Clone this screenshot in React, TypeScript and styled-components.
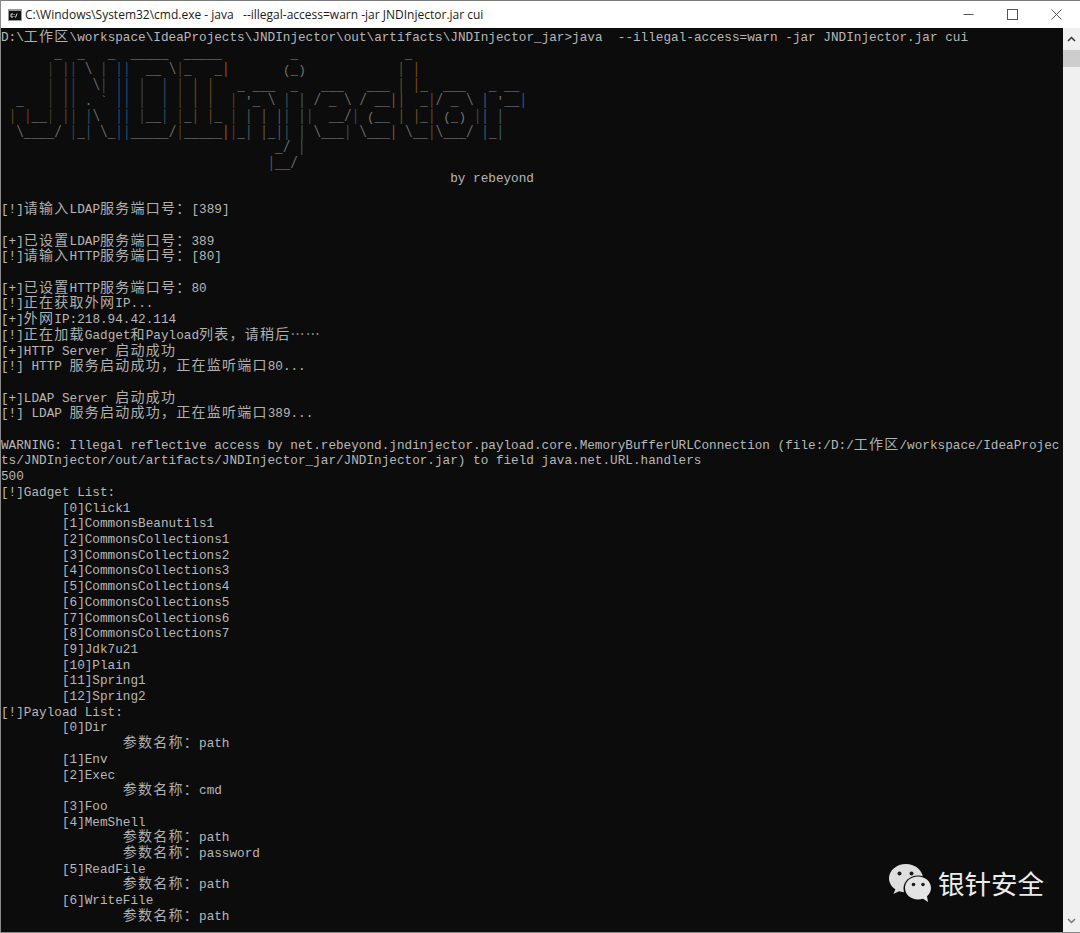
import React from "react";
import styled, {createGlobalStyle} from "styled-components";

const TITLE = "C:\\Windows\\System32\\cmd.exe - java   --illegal-access=warn -jar JNDInjector.jar cui";

const ART: [number, string][][] = [
    [[7, "_"], [10, "_"], [14, "_"], [17, "_____"], [24, "_____"], [38, "_"], [53, "_"]],
    [[6, "|"], [8, "||"], [11, "\\"], [13, "|"], [15, "||"], [19, "__"], [22, "\\"], [23, "|_"], [28, "_|"], [37, "(_)"], [52, "|"], [54, "|"]],
    [[6, "|"], [8, "||"], [12, "\\"], [13, "|"], [15, "||"], [18, "|"], [21, "|"], [23, "|"], [25, "|"], [27, "|"], [31, "_"], [33, "___"], [38, "_"], [42, "___"], [48, "___"], [52, "|"], [54, "|"], [55, "_"], [58, "___"], [64, "_"], [66, "__"]],
    [[2, "_"], [6, "|"], [8, "||"], [11, "."], [13, "`"], [15, "||"], [18, "|"], [21, "|"], [23, "|"], [25, "|"], [27, "|"], [30, "|"], [32, "'"], [33, "_"], [35, "\\"], [37, "|"], [39, "|"], [41, "/"], [43, "_"], [45, "\\"], [47, "/"], [49, "__"], [51, "|"], [52, "|"], [55, "_"], [56, "|"], [57, "/"], [59, "_"], [61, "\\"], [63, "|"], [65, "'"], [66, "__"], [68, "|"]],
    [[1, "|"], [3, "|"], [4, "__"], [6, "|"], [8, "||"], [11, "|"], [12, "\\"], [15, "||"], [18, "|"], [19, "__"], [21, "|"], [23, "|"], [24, "_"], [25, "|"], [27, "|"], [28, "_"], [30, "|"], [32, "|"], [34, "|"], [36, "|"], [37, "|"], [39, "|"], [40, "|"], [43, "__"], [45, "/"], [46, "|"], [48, "("], [49, "__"], [52, "|"], [54, "|"], [55, "_"], [56, "|"], [58, "("], [59, "_"], [60, ")"], [62, "|"], [63, "|"], [65, "|"]],
    [[2, "\\"], [3, "____"], [7, "/"], [9, "|"], [10, "_"], [11, "|"], [13, "\\"], [14, "_"], [15, "||"], [17, "_____"], [22, "/"], [23, "|"], [24, "_____"], [29, "|"], [30, "|"], [31, "_"], [32, "|"], [34, "|"], [35, "_"], [36, "|"], [37, "|"], [39, "|"], [41, "\\"], [42, "___"], [45, "|"], [47, "\\"], [48, "___"], [51, "|"], [53, "\\"], [54, "__"], [56, "|"], [57, "\\"], [58, "___"], [61, "/"], [63, "|"], [64, "_"], [65, "|"]],
    [[36, "_"], [37, "/"], [39, "|"]],
    [[35, "|"], [36, "__"], [38, "/"]],
];

// pipes of the banner take a colour from the column they stand in
const PIPE_COLORS: Record<number, string> = {
    1: "#7a5020", 3: "#7a5020", 6: "#4c4434", 8: "#555555", 9: "#4c5258", 11: "#3a5a78",
    13: "#2f5c84", 15: "#2f5c84", 16: "#2f5c84", 18: "#3a5a78", 21: "#3a5a78", 23: "#5c4c30",
    25: "#7e5220", 27: "#7e5220", 29: "#a46c20", 30: "#5c4c30", 32: "#666666", 34: "#666666",
    36: "#666666", 37: "#565c62", 39: "#3a6a90", 40: "#3a5a70", 45: "#3a5a78", 46: "#3a5a70",
    51: "#8a6a30", 52: "#8a5a20", 54: "#8a5a20", 56: "#6a5a30", 62: "#555555", 63: "#4a6a88",
    65: "#4a6a88", 68: "#3a6a90",
};

const LINES_BEFORE = [
    "D:\\工作区\\workspace\\IdeaProjects\\JNDInjector\\out\\artifacts\\JNDInjector_jar>java  --illegal-access=warn -jar JNDInjector.jar cui",
];

const LINES_AFTER = [
    "                                                           by rebeyond",
    "",
    "[!]请输入LDAP服务端口号：[389]",
    "",
    "[+]已设置LDAP服务端口号：389",
    "[!]请输入HTTP服务端口号：[80]",
    "",
    "[+]已设置HTTP服务端口号：80",
    "[!]正在获取外网IP...",
    "[+]外网IP:218.94.42.114",
    "[!]正在加载Gadget和Payload列表，请稍后……",
    "[+]HTTP Server 启动成功",
    "[!] HTTP 服务启动成功，正在监听端口80...",
    "",
    "[+]LDAP Server 启动成功",
    "[!] LDAP 服务启动成功，正在监听端口389...",
    "",
    "WARNING: Illegal reflective access by net.rebeyond.jndinjector.payload.core.MemoryBufferURLConnection (file:/D:/工作区/workspace/IdeaProjec",
    "ts/JNDInjector/out/artifacts/JNDInjector_jar/JNDInjector.jar) to field java.net.URL.handlers",
    "500",
    "[!]Gadget List:",
    "        [0]Click1",
    "        [1]CommonsBeanutils1",
    "        [2]CommonsCollections1",
    "        [3]CommonsCollections2",
    "        [4]CommonsCollections3",
    "        [5]CommonsCollections4",
    "        [6]CommonsCollections5",
    "        [7]CommonsCollections6",
    "        [8]CommonsCollections7",
    "        [9]Jdk7u21",
    "        [10]Plain",
    "        [11]Spring1",
    "        [12]Spring2",
    "[!]Payload List:",
    "        [0]Dir",
    "                参数名称：path",
    "        [1]Env",
    "        [2]Exec",
    "                参数名称：cmd",
    "        [3]Foo",
    "        [4]MemShell",
    "                参数名称：path",
    "                参数名称：password",
    "        [5]ReadFile",
    "                参数名称：path",
    "        [6]WriteFile",
    "                参数名称：path",
];

const TermLine = ({text}: { text: string }) => (
    <Line>
        {text.split(/([\u2026\u3000-\u9fff\uff00-\uffef]+)/).map((part, i) =>
            i % 2 === 1 ? <Wide key={i}>{part}</Wide> : part
        )}
    </Line>
);

const ArtLine = ({cells}: { cells: [number, string][] }) => {
    const out: React.ReactNode[] = [];
    let cursor = 0;
    cells.forEach(([col, chunk]) => {
        out.push(" ".repeat(col - cursor));
        chunk.split("").forEach((ch, i) => {
            if (ch === "|") {
                out.push(<Stroke key={`${col}-${i}`} $color={PIPE_COLORS[col + i] || "#666666"}>{ch}</Stroke>);
            } else if (ch === "/" || ch === "\\") {
                out.push(<Stroke key={`${col}-${i}`} $color="#7c7c7c">{ch}</Stroke>);
            } else {
                out.push(ch);
            }
        });
        cursor = col + chunk.length;
    });
    return <BannerLine>{out}</BannerLine>;
};

const App = () => (
    <Window>
        <GlobalStyle/>
        <TitleBar>
            <TitleIcon width="14" height="12" viewBox="0 0 14 12">
                <rect width="14" height="12" fill="#9a9a9a"/>
                <rect x="1" y="2" width="12" height="9" fill="#111111"/>
                <path d="M5 5H3v3h2M6 5v.8M6 7.2V8M9 4.5 7.5 8.5" stroke="#e0e0e0" strokeWidth="1" fill="none"/>
            </TitleIcon>
            <TitleText>{TITLE}</TitleText>
            <WindowButtons>
                <WindowButton>
                    <svg width="11" height="11" viewBox="0 0 11 11">
                        <path d="M0.5 5.5H10.5" stroke="#555555" strokeWidth="1"/>
                    </svg>
                </WindowButton>
                <WindowButton>
                    <svg width="11" height="11" viewBox="0 0 11 11">
                        <rect x="0.5" y="0.5" width="10" height="10" fill="none" stroke="#555555" strokeWidth="1"/>
                    </svg>
                </WindowButton>
                <WindowButton>
                    <svg width="11" height="11" viewBox="0 0 11 11">
                        <path d="M0.5 0.5 10.5 10.5M10.5 0.5 0.5 10.5" stroke="#555555" strokeWidth="1"/>
                    </svg>
                </WindowButton>
            </WindowButtons>
        </TitleBar>
        <Body>
            <Terminal>
                {LINES_BEFORE.map((text, i) => <TermLine key={i} text={text}/>)}
                {ART.map((cells, i) => <ArtLine key={i} cells={cells}/>)}
                {LINES_AFTER.map((text, i) => <TermLine key={i} text={text}/>)}
                <Watermark>
                    <svg width="44" height="40" viewBox="0 0 44 40">
                        <path d="M18 1C8.6 1 1 7.4 1 15.3c0 4.5 2.500 8.500 6.400 11.100L5.400 31l5.600-2.800c2.200.6 4.600 1 7 1 9.400 0 17-6.400 17-13.900S27.400 1 18 1Z" fill="#dedede"/>
                        <ellipse cx="30" cy="25.500" rx="14.500" ry="13" fill="#0c0c0c"/>
                        <path d="M30 13.500c-7.200 0-13 5.100-13 11.500s5.800 11.500 13 11.500c1.800 0 3.500-.3 5-.8L40 39l-1-5.800c2.500-2.100 4-5 4-8.200 0-6.400-5.800-11.500-13-11.500Z" fill="#e4e4e4"/>
                        <circle cx="11.500" cy="10.500" r="2" fill="#1a1a1a"/>
                        <circle cx="23.500" cy="10.500" r="2" fill="#1a1a1a"/>
                        <circle cx="25.500" cy="21.500" r="1.800" fill="#1a1a1a"/>
                        <circle cx="35" cy="21.500" r="1.800" fill="#1a1a1a"/>
                    </svg>
                    <WatermarkText>银针安全</WatermarkText>
                </Watermark>
            </Terminal>
            <ScrollBar>
                <ArrowButton>
                    <svg width="9" height="6" viewBox="0 0 9 6">
                        <path d="M1 5 4.500 1.500 8 5" stroke="#333333" strokeWidth="1.500" fill="none"/>
                    </svg>
                </ArrowButton>
                <Thumb/>
                <Track/>
                <ArrowButton>
                    <svg width="9" height="6" viewBox="0 0 9 6">
                        <path d="M1 1 4.500 4.500 8 1" stroke="#777777" strokeWidth="1.500" fill="none"/>
                    </svg>
                </ArrowButton>
            </ScrollBar>
        </Body>
    </Window>
);

const GlobalStyle = createGlobalStyle`
  html, body {
    margin: 0;
    padding: 0;
    height: 100%;
    overflow: hidden;
    background: #0c0c0c;
  }
`;

const Window = styled.div`
  display: flex;
  flex-direction: column;
  width: 1080px;
  height: 933px;
  box-sizing: border-box;
  border-left: 1px solid #8a8a8a;
  border-bottom: 1px solid #8a8a8a;
  background: #ffffff;
`;

const TitleBar = styled.div`
  display: flex;
  align-items: center;
  flex: 0 0 28px;
  box-sizing: border-box;
  padding-left: 7px;
  background: #ffffff;
  border-top: 1px solid #7a7a7a;
`;

const TitleIcon = styled.svg`
  flex: none;
  margin-right: 3px;
`;

const TitleText = styled.span`
  flex: 1;
  font-family: "Open Sans", "Noto Sans", sans-serif;
  font-size: 12px;
  color: #1a1a1a;
  white-space: pre;
`;

const WindowButtons = styled.div`
  display: flex;
  height: 100%;
  padding-right: 2px;
`;

const WindowButton = styled.div`
  display: flex;
  align-items: center;
  justify-content: center;
  width: 44px;
`;

const Body = styled.div`
  display: flex;
  flex: 1;
  min-height: 0;
`;

const Terminal = styled.div`
  position: relative;
  flex: 1;
  min-width: 0;
  box-sizing: border-box;
  padding-top: 1.5px;
  overflow: hidden;
  background: #0c0c0c;
  color: #b8b8b8;
  font-family: "Liberation Mono", monospace;
  font-size: 12.7px;
`;

const Line = styled.div`
  height: 15.714px;
  line-height: 15.714px;
  white-space: pre;
`;

const BannerLine = styled(Line)`
  color: #858585;
  opacity: 0.85;
  transform: translateY(1.5px);
`;

const Stroke = styled.span<{ $color: string }>`
  display: inline-block;
  color: ${props => props.$color};
  transform: scaleY(1.3);
  transform-origin: 50% 62%;
`;

const Wide = styled.span`
  font-family: "Noto Sans CJK SC", sans-serif;
  font-size: 14px;
  line-height: 0;
  letter-spacing: 1.24px;
  color: #b0b0b0;
`;

const Watermark = styled.div`
  position: absolute;
  left: 887px;
  top: 835px;
  display: flex;
  align-items: center;
  gap: 6px;
`;

const WatermarkText = styled.span`
  font-family: "Noto Sans CJK SC", sans-serif;
  font-size: 26.5px;
  line-height: 40px;
  color: #ececec;
`;

const ScrollBar = styled.div`
  display: flex;
  flex-direction: column;
  flex: 0 0 17px;
  background: #f0f0f0;
`;

const ArrowButton = styled.div`
  display: flex;
  align-items: center;
  justify-content: center;
  flex: 0 0 22px;
`;

const Thumb = styled.div`
  flex: 0 0 17px;
  background: #cdcdcd;
`;

const Track = styled.div`
  flex: 1;
`;

export default App;
